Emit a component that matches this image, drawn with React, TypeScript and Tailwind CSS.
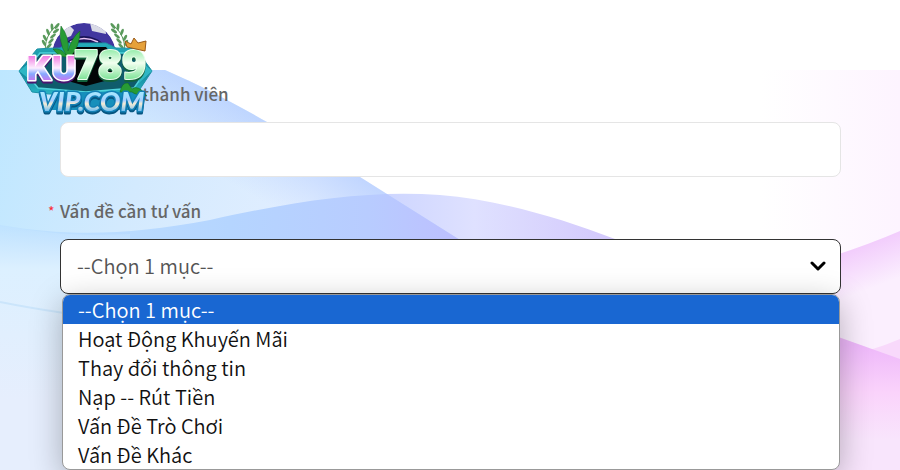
import { useState } from "react";

const topics = [
  "--Chọn 1 mục--",
  "Hoạt Động Khuyến Mãi",
  "Thay đổi thông tin",
  "Nạp -- Rút Tiền",
  "Vấn Đề Trò Chơi",
  "Vấn Đề Khác",
];

function Laurel() {
  return (
    <g fill="#5a9a5c">
      <path d="M29 38C25 28 28 14 38 6" fill="none" stroke="#5a9a5c" />
      <ellipse cx="39" cy="6" rx="3.5" ry="1.4" transform="rotate(-50 39 6)" />
      <ellipse cx="34" cy="7" rx="3.5" ry="1.4" transform="rotate(-95 34 7)" />
      <ellipse cx="38" cy="11" rx="3.5" ry="1.4" transform="rotate(-35 38 11)" />
      <ellipse cx="30" cy="12" rx="3.5" ry="1.4" transform="rotate(-110 30 12)" />
      <ellipse cx="35" cy="16" rx="3.5" ry="1.4" transform="rotate(-40 35 16)" />
      <ellipse cx="27" cy="18" rx="3.5" ry="1.4" transform="rotate(-120 27 18)" />
      <ellipse cx="33" cy="21" rx="3.5" ry="1.4" transform="rotate(-45 33 21)" />
      <ellipse cx="26" cy="23" rx="3.5" ry="1.4" transform="rotate(-120 26 23)" />
      <ellipse cx="31" cy="26" rx="3.5" ry="1.4" transform="rotate(-45 31 26)" />
    </g>
  );
}

function Logo() {
  return (
    <svg viewBox="0 0 136 96" className="block h-24 w-[136px]" role="img" aria-label="KU789 VIP.COM">
      <defs>
        <linearGradient id="gem" x1="0" y1="0" x2="0" y2="1">
          <stop offset="0" stopColor="#25aebb" />
          <stop offset="0.5" stopColor="#128296" />
          <stop offset="1" stopColor="#2fc0cf" />
        </linearGradient>
        <linearGradient id="ku" x1="0" y1="0" x2="0" y2="1">
          <stop offset="0.2" stopColor="#f07be2" />
          <stop offset="0.5" stopColor="#fdeeff" />
          <stop offset="0.65" stopColor="#86a8ff" />
          <stop offset="0.85" stopColor="#d76bee" />
        </linearGradient>
        <linearGradient id="num" x1="0" y1="0" x2="0" y2="1">
          <stop offset="0.2" stopColor="#7fe89a" />
          <stop offset="0.5" stopColor="#f2fff0" />
          <stop offset="0.85" stopColor="#67de86" />
        </linearGradient>
        <linearGradient id="vip" x1="0" y1="0" x2="0" y2="1">
          <stop offset="0.25" stopColor="#a5e8ff" />
          <stop offset="0.5" stopColor="#a9d0ff" />
          <stop offset="0.6" stopColor="#f6ecd4" />
          <stop offset="0.85" stopColor="#5fb8f4" />
        </linearGradient>
        <clipPath id="chipTop">
          <rect x="20" y="0" width="90" height="40" />
        </clipPath>
        <clipPath id="chip">
          <circle cx="66" cy="35" r="32" />
        </clipPath>
      </defs>
      <Laurel />
      <g transform="translate(134 0) scale(-1 1)">
        <Laurel />
      </g>
      <g clipPath="url(#chipTop)">
        <g clipPath="url(#chip)">
          <circle cx="66" cy="35" r="32" fill="#41369f" />
          <path d="M41 12L50 4L56 10L53 16L43 20Z" fill="#d9dae6" />
          <path d="M72 3L87 6L88 14L74 11Z" fill="#d9dae6" />
        </g>
        <path d="M40 40Q44 17 66 16Q88 17 94 40Z" fill="#1a1358" />
        <path d="M52 22Q66 15 80 22" fill="none" stroke="#e9c4f5" strokeWidth="1.5" />
      </g>
      <path d="M1 51L19 29Q30 28 42 28L50 23H88L98 28Q112 28 118 29L134 51L120 72Q104 75 88 74L68 79L48 74Q30 75 14 72Z" fill="url(#gem)" stroke="#1e91a5" />
      <path d="M7 51L22 33H116L128 51L116 68L68 72L20 68Z" fill="#0f5c6c" stroke="#4fd3dc" strokeWidth="1.5" />
      <path d="M50 40L57 27H88L98 40V58L68 66L46 60Z" fill="#020507" />
      <path d="M1 51L16 39V63ZM134 51L121 39V63Z" fill="#2fb6c4" />
      <path d="M34 72H118L125 80L121 90H34Z" fill="#168fbb" />
      <g fill="#279b35" stroke="#10651f" strokeWidth="0.5">
        <path d="M48 35Q40 22 43 6Q52 18 50 31Q54 17 62 11Q62 26 53 36Q43 40 35 29Q44 28 48 35Z" />
        <path d="M102 72Q104 62 110 63L114 69Q120 64 129 76Q117 75 114 72Z" />
      </g>
      <g fontWeight="900" strokeLinejoin="round" paintOrder="stroke">
        <g fontFamily="Inter, sans-serif" fontSize="33" className="drop-shadow-[0_2px_0_#4a1670]">
          <text x="9" y="60" fill="url(#ku)" stroke="#fff" strokeWidth="3">KU</text>
        </g>
        <g fontFamily="Open Sans, sans-serif" fontSize="41" className="drop-shadow-[0_2px_0_#12633d]">
          <text x="56" y="59" fill="url(#num)" stroke="#e9ffec" strokeWidth="2">789</text>
        </g>
        <g fontFamily="Lato, sans-serif" fontSize="27" fontStyle="italic" className="drop-shadow-[0_2px_0_#075681]">
          <text x="21" y="91" fill="url(#vip)" stroke="#1380b5" strokeWidth="3">VIP.COM</text>
        </g>
      </g>
      <path d="M109 27L107 21L113 24L116 18L120 23L128 21L127 31Z" fill="#e6a13a" stroke="#9a5a18" />
    </svg>
  );
}

function Waves() {
  return (
    <svg viewBox="0 0 900 400" preserveAspectRatio="xMinYMin slice" className="absolute inset-0 h-full w-full" aria-hidden="true">
      <defs>
        <linearGradient id="sky" x1="0" y1="0" x2="450" y2="170" gradientUnits="userSpaceOnUse">
          <stop offset="0" stopColor="#bde7ff" />
          <stop offset="0.35" stopColor="#d3eafe" />
          <stop offset="0.7" stopColor="#e2eeff" />
          <stop offset="1" stopColor="#dbe3ff" />
        </linearGradient>
        <linearGradient id="skyEdge" x1="262" y1="45" x2="225" y2="110" gradientUnits="userSpaceOnUse">
          <stop offset="0" stopColor="#b3ccff" stopOpacity="0.75" />
          <stop offset="1" stopColor="#b9d0ff" stopOpacity="0" />
        </linearGradient>
        <linearGradient id="tide" x1="380" y1="0" x2="615" y2="0" gradientUnits="userSpaceOnUse">
          <stop offset="0" stopColor="#ccd5ff" />
          <stop offset="0.4" stopColor="#dfe1ff" />
          <stop offset="1" stopColor="#d3c8fc" />
        </linearGradient>
        <linearGradient id="tideOverSky" x1="0" y1="0" x2="460" y2="0" gradientUnits="userSpaceOnUse">
          <stop offset="0" stopColor="#bfe3ff" />
          <stop offset="0.5" stopColor="#b5d5ff" />
          <stop offset="0.8" stopColor="#b8ccff" />
          <stop offset="1" stopColor="#bdbfff" />
        </linearGradient>
        <linearGradient id="mist" x1="0" y1="155" x2="0" y2="330" gradientUnits="userSpaceOnUse">
          <stop offset="0" stopColor="#dcefff" stopOpacity="0" />
          <stop offset="0.25" stopColor="#dcf0ff" />
          <stop offset="1" stopColor="#e6eefd" />
        </linearGradient>
        <linearGradient id="blush" x1="760" y1="0" x2="900" y2="0" gradientUnits="userSpaceOnUse">
          <stop offset="0" stopColor="#fdf4ff" stopOpacity="0" />
          <stop offset="1" stopColor="#fdf4ff" />
        </linearGradient>
        <linearGradient id="pinkTop" x1="865" y1="175" x2="880" y2="215" gradientUnits="userSpaceOnUse">
          <stop offset="0" stopColor="#f2cdfc" />
          <stop offset="1" stopColor="#fbeffe" />
        </linearGradient>
        <linearGradient id="pinkLow" x1="0" y1="275" x2="0" y2="370" gradientUnits="userSpaceOnUse">
          <stop offset="0" stopColor="#eeb8fa" />
          <stop offset="0.5" stopColor="#fad3fb" />
          <stop offset="1" stopColor="#f8e5fc" />
        </linearGradient>
        <clipPath id="skyShape">
          <path d="M0 0H165C200 15 235 34 267 52L360 107L460 170L520 210V400H0Z" />
        </clipPath>
      </defs>
      <rect x="740" width="160" height="400" fill="url(#blush)" />
      <path d="M0 155C70 167 130 165 210 150C300 130 370 120 440 125C500 130 560 148 615 169L700 200V400H0Z" fill="url(#tide)" />
      <g clipPath="url(#skyShape)">
        <rect width="520" height="400" fill="url(#sky)" />
        <rect width="520" height="400" fill="url(#skyEdge)" />
        <path d="M0 155C70 167 130 165 210 150C300 130 370 120 440 125C500 130 560 148 615 169V400H0Z" fill="url(#tideOverSky)" />
        <path d="M0 155C50 165 90 166 130 164V400H0Z" fill="url(#mist)" />
      </g>
      <path d="M0 232Q30 238 64 243" fill="none" stroke="#cbe5fb" strokeWidth="2" />
      <path d="M830 187Q870 174 900 161V400H830Z" fill="url(#pinkTop)" />
      <path d="M830 290Q870 282 900 269V400H830Z" fill="#f8d9fb" />
      <path d="M830 264L900 289V400H830Z" fill="url(#pinkLow)" />
    </svg>
  );
}

function App() {
  const [topic, setTopic] = useState(topics[0]);

  return (
    <div className="flex min-h-screen flex-col bg-white font-['Noto_Sans_CJK_SC','Noto_Sans',sans-serif]">
      <header className="relative z-10 h-[70px] bg-white">
        <a href="#" className="absolute top-5 left-[18px]">
          <Logo />
        </a>
      </header>
      <main className="relative flex-1">
        <Waves />
        <form className="relative pt-3 pr-[59px] pl-15">
          <div className="mb-[22px]">
            <label htmlFor="member" className="mb-4 block text-[17px] leading-6 font-medium text-[#666666]">
              Tài khoản thành viên
            </label>
            <input
              id="member"
              type="text"
              className="block h-[55px] w-full rounded-lg border border-[#e5e5e5] bg-white px-4 text-xl text-[#666666] outline-none"
            />
          </div>
          <div className="relative">
            <label htmlFor="topic" className="mb-4 block text-[17px] leading-6 font-medium text-[#666666]">
              <span className="absolute -left-3 text-sm leading-6 font-normal text-red-500">*</span>
              Vấn đề cần tư vấn
            </label>
            <div className="relative">
              <select
                id="topic"
                value={topic}
                onChange={(e) => setTopic(e.target.value)}
                className="block h-[55px] w-full appearance-none rounded-lg border border-[#333333] bg-white px-4 pb-0.5 text-xl font-[350] text-[#555555] outline-none"
              >
                {topics.map((item) => (
                  <option key={item}>{item}</option>
                ))}
              </select>
              <svg viewBox="0 0 16 16" className="pointer-events-none absolute top-[19px] right-[15px] h-4 w-4" aria-hidden="true">
                <path d="M2 5l6 6 6-6" fill="none" stroke="#000" strokeWidth="3" strokeLinecap="round" strokeLinejoin="round" />
              </svg>
              <ul
                role="listbox"
                className="absolute top-full right-px left-0.5 overflow-hidden rounded-lg border border-[#999999] bg-white text-xl leading-[29px] font-[350] text-[#111111] shadow-[0_8px_32px_rgba(0,0,0,0.28)]"
              >
                {topics.map((item) => (
                  <li
                    key={item}
                    role="option"
                    aria-selected={item === topic}
                    onClick={() => setTopic(item)}
                    className={item === topic ? "bg-[#1967d2] px-[15px] text-white" : "px-[15px]"}
                  >
                    {item}
                  </li>
                ))}
              </ul>
            </div>
          </div>
        </form>
      </main>
    </div>
  );
}

export default App;
